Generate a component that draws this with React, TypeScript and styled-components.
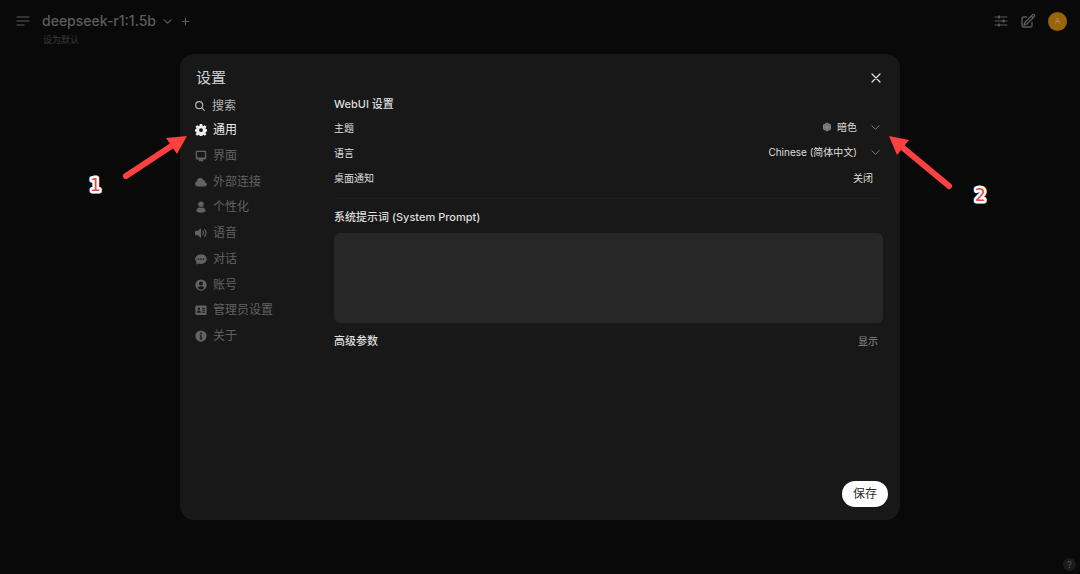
import React from "react";
import styled, { createGlobalStyle } from "styled-components";

const Global = createGlobalStyle`
  *, *::before, *::after { box-sizing: border-box; }
  body {
    margin: 0;
    background: #090909;
    color: #dedede;
    font-family: Inter, "Noto Sans CJK SC", sans-serif;
    font-size: 12px;
  }
  button, select, textarea, input { font: inherit; color: inherit; }
  button { padding: 0; border: 0; background: none; cursor: pointer; }
  h1, h2, h3 { margin: 0; }
  svg { display: block; flex: none; }
`;

const Page = styled.div`
  position: relative;
  min-height: 100vh;
`;

const TopBar = styled.header`
  display: flex;
  justify-content: space-between;
  padding: 11px 13px 0 16px;
  color: #5c5c5c;
`;

const BarGroup = styled.div<{ $gap: number }>`
  display: flex;
  align-items: center;
  gap: ${(p) => p.$gap}px;
  height: 20px;
`;

const ModelName = styled.h1`
  font-size: 14px;
  font-weight: 500;
  line-height: 20px;
`;

const ModelButton = styled.button`
  display: flex;
  align-items: center;
  gap: 7px;
`;

const DefaultButton = styled.button`
  display: block;
  margin-left: 27px;
  color: #3c3c3c;
  font-size: 9px;
  line-height: 18px;
`;

const Avatar = styled.button`
  width: 19px;
  height: 19px;
  border-radius: 50%;
  background: #9a640c;
  color: #b08f5a;
  font-size: 8px;
  line-height: 19px;
`;

const Overlay = styled.div`
  position: absolute;
  inset: 0;
  padding: 54px 16px;
`;

const Dialog = styled.section`
  display: flex;
  flex-direction: column;
  max-width: 720px;
  min-height: 466px;
  margin: 0 auto;
  padding: 14px 12px 13px 14px;
  border-radius: 14px;
  background: #181818;
`;

const DialogHead = styled.div`
  display: flex;
  align-items: center;
  justify-content: space-between;
  height: 20px;
  padding: 0 6px 0 2px;
`;

const DialogTitle = styled.h2`
  font-size: 15px;
  font-weight: 400;
  line-height: 22px;
  color: #d0d0d0;
`;

const DialogBody = styled.div`
  display: flex;
  flex: 1;
  gap: 12px;
  padding-top: 8px;
`;

const Sidebar = styled.aside`
  width: 128px;
  flex: none;
  padding-left: 1px;
`;

const SearchLabel = styled.label`
  display: flex;
  align-items: center;
  gap: 7px;
  height: 20px;
  color: #b4b4b4;
`;

const SearchInput = styled.input`
  width: 100px;
  padding: 0;
  border: 0;
  outline: 0;
  background: none;
  line-height: 20px;
  &::placeholder { color: #b4b4b4; opacity: 1; }
`;

const Nav = styled.nav`
  display: flex;
  flex-direction: column;
  justify-content: space-between;
  height: 226px;
  margin-top: 4px;
`;

const NavItem = styled.button<{ $active?: boolean }>`
  display: flex;
  align-items: center;
  gap: 6px;
  height: 20px;
  line-height: 20px;
  color: ${(p) => (p.$active ? "#ececec" : "#626262")};
`;

const Content = styled.form`
  display: flex;
  flex: 1;
  flex-direction: column;
  min-width: 0;
`;

const SectionTitle = styled.h3`
  font-size: 11px;
  font-weight: 500;
  line-height: 16px;
`;

const Rows = styled.div`
  display: flex;
  flex-direction: column;
  gap: 5px;
  margin: 5px 5px 0 0;
  padding-bottom: 11px;
  border-bottom: 1px solid #1d1d1d;
`;

const Row = styled.div`
  display: flex;
  align-items: center;
  justify-content: space-between;
  height: 20px;
  font-size: 10px;
`;

const SelectBox = styled.div`
  display: flex;
  align-items: center;
  gap: 5px;
  padding-right: 3px;
  color: #8a8a8a;
`;

const Select = styled.select`
  appearance: none;
  field-sizing: content;
  padding: 0;
  border: 0;
  outline: 0;
  background: none;
  color: #dedede;
  line-height: 20px;
`;

const Chevron = styled.span`
  margin-left: 9px;
`;

const StateButton = styled.button`
  padding-right: 10px;
`;

const PromptLabel = styled.label`
  margin-top: 10px;
  font-size: 11px;
  font-weight: 500;
  line-height: 16px;
`;

const Prompt = styled.textarea`
  display: block;
  height: 90px;
  margin: 8px 5px 0 0;
  padding: 8px;
  border: 0;
  border-radius: 6px;
  outline: 0;
  resize: none;
  background: #272727;
`;

const AdvancedRow = styled.div`
  display: flex;
  align-items: center;
  justify-content: space-between;
  margin-top: 10px;
  padding-right: 10px;
`;

const ShowButton = styled.button`
  color: #8c8c8c;
  font-size: 10px;
  line-height: 16px;
`;

const SaveButton = styled.button`
  align-self: flex-end;
  height: 26px;
  margin-top: auto;
  padding: 0 11px;
  border-radius: 13px;
  background: #fff;
  color: #2a2a2a;
  line-height: 26px;
`;

const HelpButton = styled.button`
  position: absolute;
  right: 4px;
  bottom: 3px;
  width: 13px;
  height: 13px;
  border-radius: 50%;
  background: #1b1b1b;
  color: #5c5c5c;
  font-size: 9px;
  line-height: 13px;
`;

/* Annotations are anchored to the centred dialog's edges. */
const Marker = styled.div<{ $side: "left" | "right" }>`
  position: absolute;
  top: 120px;
  left: 50%;
  margin-left: ${(p) => (p.$side === "left" ? -460 : 340)}px;
  pointer-events: none;
`;

const markText = {
  fill: "#e5484a",
  stroke: "#fff",
  strokeWidth: 5,
  strokeLinejoin: "round" as const,
  paintOrder: "stroke",
  fontFamily: "'DejaVu Sans', sans-serif",
  fontSize: 17,
};

const line = {
  fill: "none",
  stroke: "currentColor",
  strokeLinecap: "round" as const,
  strokeLinejoin: "round" as const,
};

const ChevronIcon = ({ weight = 1.2 }: { weight?: number }) => (
  <svg width="9" height="9" viewBox="0 0 10 10" {...line} strokeWidth={weight}>
    <path d="M1 3l4 4 4-4" />
  </svg>
);

const Glyph = ({ children }: { children: React.ReactNode }) => (
  <svg width="12" height="12" viewBox="0 0 16 16" fill="currentColor" fillRule="evenodd" aria-hidden="true">
    {children}
  </svg>
);

const items = [
  {
    label: "通用",
    icon: (
      <path d="M6.400 0h3.200l.4 2.300 1.200.5 1.900-1.300 2.200 2.200-1.300 1.900.5 1.200 2.200.4v2.800l-2.200.4-.5 1.200 1.300 1.900-2.200 2.200-1.900-1.300-1.200.5-.4 2.300H6.400L6 14.900l-1.200-.5-1.900 1.300-2.200-2.200L2 11.600l-.5-1.200L0 10V7.200L1.500 6.800 2 5.600.7 3.700l2.200-2.200 1.900 1.300L6 2.300zM8 5.500a2.600 2.600 0 100 5.200 2.600 2.600 0 000-5.200z" />
    ),
  },
  {
    label: "界面",
    icon: <path d="M2.500 1h11A1.500 1.500 0 0115 2.500v8.500a1.500 1.500 0 01-1.500 1.500h-3l.5 1.500v1H5v-1l.5-1.500h-3A1.500 1.500 0 011 11V2.500A1.500 1.500 0 012.500 1zM2.800 2.800v7.200h10.400V2.800z" />,
  },
  {
    label: "外部连接",
    icon: <path d="M4 14a3.700 3.700 0 01-1.700-7A4.600 4.600 0 0111 5.200 3.200 3.200 0 0113.700 8.500 2.800 2.800 0 0113 14z" />,
  },
  {
    label: "个性化",
    icon: <path d="M8 .5a3.700 3.700 0 110 7.400A3.700 3.700 0 018 .5zM2 13c0-2.700 2-4.200 4-4.500 1.200.7 2.800.7 4 0 2 .3 4 1.800 4 4.500 0 1.600-2.700 2.500-6 2.500S2 14.600 2 13z" />,
  },
  {
    label: "语音",
    icon: (
      <>
        <path d="M8 1.500v13L4 11H1.500A1.500 1.500 0 010 9.500v-3A1.500 1.500 0 011.500 5H4z" />
        <path d="M10.300 5.500q2 2.500 0 5M12.700 3.300q4 4.700 0 9.400" fill="none" stroke="currentColor" strokeWidth="1.500" strokeLinecap="round" />
      </>
    ),
  },
  {
    label: "对话",
    icon: <path d="M8 1.500c4.300 0 7.700 2.900 7.700 6.500S12.300 14.500 8 14.500c-1 0-2-.2-2.900-.5-1.100.9-2.500 1.300-4 1.100.9-.9 1.100-1.800 1-2.700C1 11.200.3 9.700.3 8c0-3.600 3.400-6.500 7.700-6.500zM4.500 7a1.100 1.100 0 100 2.200 1.100 1.100 0 000-2.200zM8 7a1.100 1.100 0 100 2.200A1.100 1.100 0 008 7zm3.500 0a1.100 1.100 0 100 2.200 1.100 1.100 0 000-2.200z" />,
  },
  {
    label: "账号",
    icon: <path d="M8 .5a7.500 7.500 0 110 15 7.500 7.500 0 010-15zm0 2.800a2.700 2.700 0 100 5.400 2.700 2.700 0 000-5.400zM3.500 11.700C4.800 13.300 6.300 14 8 14s3.200-.7 4.500-2.300C11.400 10.300 9.800 9.700 8 9.700s-3.400.6-4.500 2z" />,
  },
  {
    label: "管理员设置",
    icon: <path d="M2 2h12a1.500 1.500 0 011.500 1.500v9.500a1.500 1.500 0 01-1.500 1.500H2A1.500 1.500 0 01.5 13V3.500A1.500 1.500 0 012 2zM5.200 4.800a1.600 1.600 0 100 3.200 1.600 1.600 0 000-3.200zM2.500 11.700h5.400c0-1.900-1.300-2.900-2.700-2.900s-2.700 1-2.700 2.900zM9.500 5v1.300h4V5zm0 2.600v1.300h4V7.600zm0 2.600v1.300h4v-1.300z" />,
  },
  {
    label: "关于",
    icon: <path d="M8 .5a7.500 7.500 0 110 15 7.500 7.500 0 010-15zm0 2.700A1.300 1.300 0 108 5.800a1.300 1.300 0 000-2.600zM6.200 6.900v1.400h1v2.900h-1v1.400h3.700v-1.400h-1V6.900z" />,
  },
];

export default function App() {
  return (
    <Page>
      <Global />
      <TopBar>
        <div>
          <BarGroup $gap={12}>
            <button aria-label="菜单">
              <svg width="14" height="12" viewBox="0 0 14 12" {...line} strokeWidth="1.200">
                <path d="M1 2h12M1 6h12M1 10h7" />
              </svg>
            </button>
            <BarGroup $gap={9}>
              <ModelButton>
                <ModelName>deepseek-r1:1.5b</ModelName>
                <ChevronIcon />
              </ModelButton>
              <button aria-label="添加模型">
                <svg width="9" height="9" viewBox="0 0 10 10" {...line} strokeWidth="1.200">
                  <path d="M5 1.500v7M1.500 5h7" />
                </svg>
              </button>
            </BarGroup>
          </BarGroup>
          <DefaultButton>设为默认</DefaultButton>
        </div>
        <BarGroup $gap={12}>
          <button aria-label="对话参数">
            <svg width="14" height="14" viewBox="0 0 14 14" {...line} strokeWidth="1.100">
              <path d="M1 3h12M1 7h12M1 11h12" />
              <path d="M5 2.200v1.600M9.500 6.200v1.600M5 10.200v1.600" strokeWidth="1.800" />
            </svg>
          </button>
          <button aria-label="新对话">
            <svg width="16" height="16" viewBox="0 0 24 24" {...line} strokeWidth="2">
              <path d="M16.900 4.500l1.700-1.700a1.900 1.900 0 112.600 2.700L10.600 16.100a4.500 4.500 0 01-1.900 1.100L6 18l.8-2.700a4.500 4.500 0 011.100-1.900zm0 0l2.600 2.600M18 14v4.800a2.200 2.200 0 01-2.200 2.200H5.200A2.200 2.200 0 013 18.800V8.200A2.200 2.200 0 015.200 6H10" />
            </svg>
          </button>
          <Avatar aria-label="用户菜单">A</Avatar>
        </BarGroup>
      </TopBar>

      <Overlay>
        <Dialog role="dialog" aria-labelledby="settings-title">
          <DialogHead>
            <DialogTitle id="settings-title">设置</DialogTitle>
            <button aria-label="关闭设置">
              <svg width="12" height="12" viewBox="0 0 12 12" {...line} strokeWidth="1.300">
                <path d="M2 2l8 8M10 2l-8 8" />
              </svg>
            </button>
          </DialogHead>
          <DialogBody>
            <Sidebar>
              <SearchLabel>
                <svg width="10" height="10" viewBox="0 0 12 12" {...line} strokeWidth="1.400">
                  <circle cx="5" cy="5" r="4.200" />
                  <path d="M8.200 8.200l3 3" />
                </svg>
                <SearchInput type="text" aria-label="搜索" placeholder="搜索" />
              </SearchLabel>
              <Nav>
                {items.map((item, i) => (
                  <NavItem key={item.label} type="button" $active={i === 0}>
                    <Glyph>{item.icon}</Glyph>
                    {item.label}
                  </NavItem>
                ))}
              </Nav>
            </Sidebar>
            <Content onSubmit={(e) => e.preventDefault()}>
              <SectionTitle>WebUI 设置</SectionTitle>
              <Rows>
                <Row>
                  <label htmlFor="theme">主题</label>
                  <SelectBox>
                    <svg width="10" height="10" viewBox="0 0 12 12">
                      <path d="M6 .5l4.800 2.700v5.600L6 11.500 1.200 8.800V3.200z" fill="#858585" />
                      <path d="M6 3l2.600 1.500v3L6 9 3.400 7.500v-3zM6 .5V3M6 9v2.500M1.200 3.200l2.200 1.300M8.600 7.500l2.200 1.300M10.800 3.200L8.600 4.500M3.400 7.500L1.200 8.800" fill="none" stroke="#555" strokeWidth=".6" />
                    </svg>
                    <Select id="theme"><option>暗色</option></Select>
                    <Chevron><ChevronIcon weight={1} /></Chevron>
                  </SelectBox>
                </Row>
                <Row>
                  <label htmlFor="language">语言</label>
                  <SelectBox>
                    <Select id="language"><option>Chinese (简体中文)</option></Select>
                    <Chevron><ChevronIcon weight={1} /></Chevron>
                  </SelectBox>
                </Row>
                <Row>
                  <span id="notify">桌面通知</span>
                  <StateButton type="button" aria-describedby="notify">关闭</StateButton>
                </Row>
              </Rows>
              <PromptLabel htmlFor="prompt">系统提示词 (System Prompt)</PromptLabel>
              <Prompt id="prompt" />
              <AdvancedRow>
                <SectionTitle>高级参数</SectionTitle>
                <ShowButton type="button">显示</ShowButton>
              </AdvancedRow>
              <SaveButton type="submit">保存</SaveButton>
            </Content>
          </DialogBody>
        </Dialog>
      </Overlay>

      <Marker $side="left">
        <svg width="120" height="90" viewBox="0 0 120 90">
          <path d="M46 56L96 23" stroke="#fd413e" strokeWidth="6" strokeLinecap="round" />
          <path d="M107 16L97 34 86 18z" fill="#fd413e" />
          <text x="10" y="71" {...markText}>1</text>
        </svg>
      </Marker>
      <Marker $side="right">
        <svg width="120" height="90" viewBox="0 0 120 90">
          <path d="M69 66L22 27" stroke="#fd413e" strokeWidth="6" strokeLinecap="round" />
          <path d="M9 16L29 20 17 35z" fill="#fd413e" />
          <text x="95" y="81" {...markText}>2</text>
        </svg>
      </Marker>
      <HelpButton aria-label="帮助">?</HelpButton>
    </Page>
  );
}
